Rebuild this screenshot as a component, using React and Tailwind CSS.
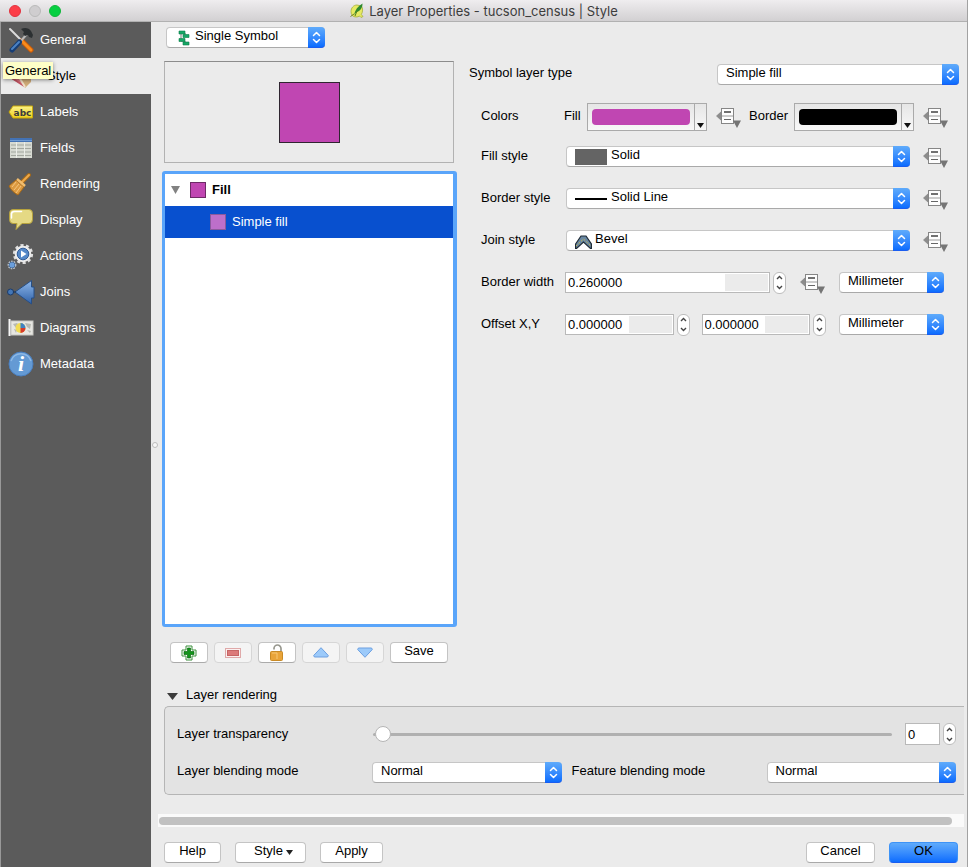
import React from "react";

const label = "text-[13px] leading-[16px] text-black";

function Stepper({ name }) {
  return (
    <span className="flex h-[22px] w-[13px] shrink-0 flex-col overflow-hidden rounded-[6px] border border-[#bdbdbd] bg-white">
      <button type="button" aria-label={`Increase ${name}`} className="flex flex-1 items-center justify-center">
        <svg width="7" height="5" viewBox="0 0 7 5" fill="none" stroke="#444" strokeWidth="1.4"><path d="M1 4l2.5-2.5L6 4" /></svg>
      </button>
      <button type="button" aria-label={`Decrease ${name}`} className="flex flex-1 items-center justify-center">
        <svg width="7" height="5" viewBox="0 0 7 5" fill="none" stroke="#444" strokeWidth="1.4"><path d="M1 1l2.5 2.5L6 1" /></svg>
      </button>
    </span>
  );
}

function Select({ id, ariaLabel, options, className = "", pad = "pl-[8px]", icon }) {
  return (
    <span className={`relative flex h-[21px] ${className}`}>
      <select
        id={id}
        aria-label={ariaLabel}
        className={`h-full w-full appearance-none rounded-[4px] border border-[#c6c6c6] border-b-[#a9a9a9] bg-white pr-5 pb-[4px] text-[13px] leading-[15px] text-black outline-none ${pad}`}
      >
        {options.map((o) => <option key={o}>{o}</option>)}
      </select>
      {icon && <span className="pointer-events-none absolute inset-y-0 left-[9px] flex items-center">{icon}</span>}
      <span className="pointer-events-none absolute inset-y-0 right-0 flex w-[17px] items-center justify-center rounded-r-[4px] border-b border-[#1a5df0] bg-linear-to-b from-[#5fabfb] to-[#0a6cfe]">
        <svg width="9" height="13" viewBox="0 0 9 13" fill="none" stroke="#fff" strokeWidth="1.5" strokeLinecap="round" strokeLinejoin="round">
          <path d="M1.5 4.500l3-3 3 3M1.500 8.500l3 3 3-3" />
        </svg>
      </span>
    </span>
  );
}

function ValueBox({ id, ariaLabel, value, className = "" }) {
  return (
    <span className={`flex h-[21px] min-w-0 border border-[#b9b9b9] bg-white p-px ${className}`}>
      <input id={id} aria-label={ariaLabel} defaultValue={value} className="h-full w-0 flex-1 bg-white pl-px pb-px text-[13px] leading-[16px] text-black outline-none" />
      <span className="w-[43px] shrink-0 bg-[#ebebeb]" />
    </span>
  );
}

function Override({ name }) {
  return (
    <button type="button" aria-label={`Data defined ${name}`} className="h-[22px] w-[25px] shrink-0">
      <svg width="25" height="22" viewBox="0 -2 25 22">
        <path d="M0.500 8L6 3v10z" fill="#8c8c8c" stroke="#7a7a7a" strokeWidth="0.6" />
        <rect x="5.500" y="0.500" width="12" height="15" fill="#fdfdfd" stroke="#868686" />
        <path d="M6 8h11" stroke="#9a9a9a" />
        <path d="M8 4h7" stroke="#4d4d4d" strokeWidth="1.600" />
        <path d="M8 11.500h7" stroke="#666" />
        <path d="M17 12.500h8L21 20z" fill="#757575" />
      </svg>
    </button>
  );
}

function ColorButton({ name, swatch }) {
  return (
    <button type="button" aria-label={name} className="flex h-[28px] flex-1 border border-[#aaa] bg-linear-to-b from-[#e6e6e6] to-[#f8f8f8]">
      <span className="flex h-full flex-1 items-center px-[4px]">
        <span className={`h-[16px] w-full rounded-[4px] ${swatch}`} />
      </span>
      <span className="flex h-full w-[12px] items-end justify-center border-l border-[#aaa] pb-[2px]">
        <svg width="7" height="5" viewBox="0 0 7 5"><path d="M0 0h7L3.500 5z" fill="#111" /></svg>
      </span>
    </button>
  );
}

const icons = {
  General: (
    <svg width="26" height="26" viewBox="0 0 26 26">
      <path d="M2 2l11 11" stroke="#dcdcdc" strokeWidth="2" strokeLinecap="round" />
      <path d="M14 14l9 9" stroke="#c85a08" strokeWidth="5" strokeLinecap="round" />
      <path d="M14 14l9 9" stroke="#f98b1d" strokeWidth="3" strokeLinecap="round" />
      <path d="M19 7L12 15" stroke="#b9b9b9" strokeWidth="2" />
      <path d="M11.500 15L4 23" stroke="#173d74" strokeWidth="5" strokeLinecap="round" />
      <path d="M11 15L4 22" stroke="#4b82c4" strokeWidth="2" strokeLinecap="round" />
      <path d="M13 2c4-2 8-1 10 2l2 4-1 3-3-1-1-2-3 1-2-2 1-2z" fill="#2c3032" />
    </svg>
  ),
  Style: (
    <svg width="26" height="26" viewBox="0 0 26 26">
      <path d="M3 15l10-3 7 10-3 1z" fill="#dd7380" />
      <path d="M3 15l5 1 10 7-1 1z" fill="#c25562" />
      <path d="M12 12h12v7l-6 6z" fill="#cfab78" />
      <path d="M12 14l6 10" stroke="#efe0c8" strokeWidth="2" />
    </svg>
  ),
  Labels: (
    <svg width="26" height="26" viewBox="0 0 26 26">
      <defs><linearGradient id="tag" x1="0" y1="0" x2="0" y2="1"><stop offset="0" stopColor="#fbf28a" /><stop offset="1" stopColor="#efd21c" /></linearGradient></defs>
      <path d="M1 13l4-6h19.500v12H5z" fill="url(#tag)" stroke="#c9a90b" strokeLinejoin="round" />
      <text x="14.500" y="16.500" textAnchor="middle" fontSize="9" fontWeight="700" fontFamily="DejaVu Sans, sans-serif" fill="#3c3c3c">abc</text>
    </svg>
  ),
  Fields: (
    <svg width="26" height="26" viewBox="0 0 26 26">
      <rect x="2" y="3" width="22" height="20" fill="#d7dad2" />
      <rect x="2" y="3" width="22" height="4" fill="#4372b4" />
      <path d="M2 5.500h22" stroke="#6e9ad2" />
      <path d="M3 10h20M3 13.500h20M3 17h20M3 20.500h20" stroke="#a3a79f" strokeWidth="1.200" />
      <path d="M8.500 7v16M16.500 7v16" stroke="#eceee9" />
    </svg>
  ),
  Rendering: (
    <svg width="26" height="26" viewBox="0 0 26 26">
      <path d="M14 11l7-7" stroke="#a96a17" strokeWidth="4" strokeLinecap="round" />
      <path d="M14 11l7-7" stroke="#eeaa4c" strokeWidth="2" strokeLinecap="round" />
      <path d="M8 9l8 7-6 8c-4-2-7-5-9-9z" fill="#dc9a41" stroke="#a96a17" />
      <path d="M8 11l-4 5M11 13l-5 6M13 15l-5 7" stroke="#f5c57e" />
      <path d="M9 8l8 7" stroke="#f3bd6d" strokeWidth="2.500" />
    </svg>
  ),
  Display: (
    <svg width="26" height="26" viewBox="0 0 26 26">
      <path d="M5 2.500h16q3.500 0 3.500 4v6q0 4-3.500 4h-7l-6 6 1-6H5q-3.500 0-3.500-4v-6q0-4 3.500-4z" fill="#e5d984" stroke="#b6a23d" />
      <path d="M3.500 11V7q0-2.500 3-2.500h7" fill="none" stroke="#fff" strokeWidth="1.500" strokeLinecap="round" />
    </svg>
  ),
  Actions: (
    <svg width="28" height="28" viewBox="0 0 28 28">
      <circle cx="16" cy="12" r="8.600" fill="none" stroke="#dedede" strokeWidth="3" strokeDasharray="3 2.400" />
      <circle cx="16" cy="12" r="8.300" fill="#ececec" />
      <circle cx="16" cy="12" r="5.800" fill="#5488c8" stroke="#315c98" />
      <path d="M14 8.500l5.500 3.500-5.500 3.500z" fill="#fff" />
      <circle cx="5" cy="23" r="3.600" fill="none" stroke="#cfd6df" strokeWidth="1.500" strokeDasharray="1.600 1" />
      <circle cx="5" cy="23" r="3" fill="#6b9fdc" stroke="#3d618f" strokeWidth="0.700" />
    </svg>
  ),
  Joins: (
    <svg width="28" height="26" viewBox="0 0 28 26">
      <defs><linearGradient id="join" x1="0" y1="0" x2="0" y2="1"><stop offset="0" stopColor="#8fb8ea" /><stop offset="1" stopColor="#2f61a8" /></linearGradient></defs>
      <path d="M8 13L24.500 1.500V8h2.500v11h-2.500v6z" fill="url(#join)" stroke="#274f86" />
      <circle cx="3.500" cy="13" r="3" fill="#4477b7" stroke="#1c3b68" />
      <path d="M6 13h3" stroke="#16335d" />
    </svg>
  ),
  Diagrams: (
    <svg width="26" height="26" viewBox="0 0 26 26">
      <rect x="3" y="6" width="22" height="14" fill="#e7e7e2" stroke="#c7c7c2" />
      <path d="M5 9l4-1 2 2-3 3zM17 8l6 1-1 5-3-2zM19 15l4 1-1 2zM6 14l3 1-1 3z" fill="#b7b9b2" />
      <path d="M1.500 4v17" stroke="#f6f6f6" strokeWidth="2" />
      <circle cx="12.500" cy="13" r="5" fill="#f2dc52" />
      <path d="M12.500 13V8a5 5 0 0 1 5 5z" fill="#3e82c4" />
      <path d="M12.500 13h5a5 5 0 0 1-5 5z" fill="#d63a2b" />
    </svg>
  ),
  Metadata: (
    <svg width="26" height="26" viewBox="0 0 26 26">
      <circle cx="13" cy="13" r="12" fill="#649ad4" stroke="#4a7fbf" />
      <path d="M3 10a10.500 10.500 0 0 1 20 0" fill="none" stroke="#8db8e5" strokeWidth="1.500" />
      <text x="13" y="20" textAnchor="middle" fontSize="22" fontWeight="700" fontStyle="italic" fontFamily="Liberation Serif, serif" fill="#fff">i</text>
    </svg>
  ),
};

function ToolButton({ name, disabled, children }) {
  return (
    <button
      type="button"
      aria-label={name}
      disabled={disabled}
      className="flex h-[21px] w-[38px] items-center justify-center rounded-[4px] border border-[#c4c4c4] border-b-[#ababab] bg-white disabled:border-[#d6d6d6] disabled:bg-[#f4f4f4]"
    >
      {children}
    </button>
  );
}

function PushButton({ className, children }) {
  return (
    <button type="button" className={`flex h-[21px] items-center justify-center rounded-[4px] border border-[#c4c4c4] border-b-[#a9a9a9] bg-white pb-[3px] text-[13px] leading-[16px] text-black ${className}`}>
      {children}
    </button>
  );
}

export default function App() {
  return (
    <div className="flex min-h-screen w-full flex-col border-r border-[#a2a2a2] bg-[#ebebeb] font-['Liberation_Sans',Arial,sans-serif] text-black">
      <header className="relative flex h-[22px] items-center justify-center border-b border-[#b1b1b1] bg-linear-to-b from-[#efedef] to-[#d2d0d2]">
        <div className="absolute inset-y-0 left-[9px] flex items-center gap-2">
          <button type="button" aria-label="Close" className="size-3 rounded-full border border-[#e2333f] bg-[#fc3e48]" />
          <button type="button" aria-label="Minimize" className="size-3 rounded-full border border-[#bababa] bg-[#cfcdcf]" />
          <button type="button" aria-label="Zoom" className="size-3 rounded-full border border-[#10b63a] bg-[#06cf41]" />
        </div>
        <h1 className="flex items-center gap-1 font-['Inter',Roboto,sans-serif] text-[13px] leading-[16px] text-[#3c3c3c]">
          <svg width="16" height="16" viewBox="0 0 16 16">
            <path d="M8 2c-3.500 0-6 3-6 6.500C2 12 4 14 7 14c1.500 0 2.500-.4 3.500-1l1.500 1.500 2-1-1.700-2C14 9 14 5 12.500 3z" fill="#e6ea62" stroke="#a4ad3c" strokeWidth="0.800" />
            <path d="M1.500 13.500L5 11" stroke="#6f8424" />
            <path d="M5 12C6 7 9 3 13.500 0.500 13.500 5 11 8.500 7.500 9z" fill="#2f8a2e" />
            <path d="M8 8l-2 5" stroke="#557d1f" />
          </svg>
          Layer Properties - tucson_census | Style
        </h1>
      </header>

      <div className="flex flex-1">
        <nav className="relative w-[151px] shrink-0 border-l border-[#999] bg-[#5b5b5b]">
          {Object.keys(icons).map((name) => (
            <a
              key={name}
              href={`#${name.toLowerCase()}`}
              className={`flex h-[36px] items-center text-[13px] leading-[16px] ${name === "Style" ? "bg-[#ebebeb] text-black" : "text-white"}`}
            >
              <span className={`flex shrink-0 items-center justify-center ${name === "Style" ? "w-[46px] pr-[8px]" : "w-[39px]"}`}>{icons[name]}</span>
              {name}
            </a>
          ))}
          <span role="tooltip" className="absolute left-[2px] top-[40px] bg-[#fefec7] px-[2px] text-[13px] leading-[17px] text-black shadow-[0_1px_4px_rgba(0,0,0,0.45)]">General</span>
        </nav>

        <div className="flex w-[7px] shrink-0 items-center justify-center">
          <span className="size-[6px] rounded-full border border-[#bcbcbc] bg-[#f7f7f7]" />
        </div>

        <main className="flex min-w-0 flex-1 flex-col">
          <div className="flex flex-1 pr-2">
            <section className="flex w-[299px] shrink-0 flex-col pt-[5px] pl-1">
              <Select
                ariaLabel="Renderer"
                options={["Single Symbol"]}
                className="ml-1 w-[159px]"
                pad="pl-[28px]"
                icon={
                  <svg className="ml-[3px]" width="12" height="16" viewBox="0 0 12 16">
                    <path d="M3 3v8h4v3M7 3v4" stroke="#777" fill="none" />
                    <path d="M1 1h6v3H1zM5 4.500h6v3H5zM1 8.500h6v3H1zM5 12h6v3H5z" fill="#16a765" stroke="#0b7d49" strokeWidth="0.600" />
                  </svg>
                }
              />
              <div className="mt-[13px] ml-[2px] mr-[3px] flex h-[102px] items-center justify-center border border-[#b2b2b2] border-t-[#8c8c8c]">
                <span className="size-[61px] border border-[#2f2530] bg-[#c046b2]" />
              </div>
              <div role="tree" aria-label="Symbol layers" className="mt-[8px] flex-1 rounded-[3px] border-[3px] border-r-4 border-[#5aa5fa] bg-white">
                <div role="treeitem" aria-expanded="true" className="flex h-[32px] items-center text-[13px] font-bold leading-[16px]">
                  <svg className="ml-[6px]" width="9" height="8" viewBox="0 0 9 8"><path d="M0 0h9L4.500 8z" fill="#828282" /></svg>
                  <span className="ml-[10px] mr-[6px] size-[16px] border border-[#6d2a66] bg-[#c046b2]" />
                  Fill
                </div>
                <div role="treeitem" aria-selected="true" className="flex h-[32px] items-center bg-[#0850cf] pl-[45px] text-[13px] leading-[16px] text-white">
                  <span className="mr-[6px] size-[16px] border border-[#8a5a9d] bg-[#bd6fca]" />
                  Simple fill
                </div>
              </div>
              <div className="mt-[15px] ml-2 flex gap-[6px]">
                <ToolButton name="Add symbol layer">
                  <svg width="16" height="16" viewBox="0 0 16 16">
                    <path d="M5 1h6v4h4v6h-4v4H5v-4H1V5h4z" fill="#fff" stroke="#3d8f3d" />
                    <path d="M6.500 3h3v3.500H13v3H9.500V13h-3V9.500H3v-3h3.500z" fill="#12941a" stroke="#0a6b10" strokeWidth="0.700" />
                  </svg>
                </ToolButton>
                <ToolButton name="Remove symbol layer" disabled>
                  <svg width="16" height="10" viewBox="0 0 16 10">
                    <rect x="0.500" y="0.500" width="15" height="9" fill="#fbf0f0" stroke="#dfa9a9" />
                    <rect x="2.500" y="2.500" width="11" height="5" fill="#dc7a7a" stroke="#c56565" />
                  </svg>
                </ToolButton>
                <ToolButton name="Lock layer's color">
                  <svg width="16" height="18" viewBox="0 0 16 18">
                    <path d="M5 5.500V4.500a3.500 3.500 0 0 1 7 0V8" fill="none" stroke="#98988f" strokeWidth="1.700" />
                    <rect x="1.500" y="7.500" width="12" height="9" rx="1" fill="#e9a439" stroke="#c98a25" />
                    <path d="M3 9h5v6" stroke="#f7c877" fill="none" />
                  </svg>
                </ToolButton>
                <ToolButton name="Move up" disabled>
                  <svg width="16" height="11" viewBox="0 0 16 11"><path d="M8 0.700L15.300 8.500q0 1.500-1.300 1.500H2Q.7 10 .7 8.500z" fill="#9ccafa" stroke="#6c9fe0" strokeLinejoin="round" /></svg>
                </ToolButton>
                <ToolButton name="Move down" disabled>
                  <svg width="16" height="11" viewBox="0 0 16 11"><path d="M8 10.300L15.300 2.500q0-1.500-1.300-1.500H2Q.7 1 .7 2.500z" fill="#9ccafa" stroke="#6c9fe0" strokeLinejoin="round" /></svg>
                </ToolButton>
                <PushButton className="w-[58px]">Save</PushButton>
              </div>
            </section>

            <section className="flex min-w-0 flex-1 flex-col pt-[42px] pl-[12px]">
              <div className="flex items-center justify-between">
                <label htmlFor="layer-type" className={`${label} pb-[3px]`}>Symbol layer type</label>
                <Select id="layer-type" options={["Simple fill"]} className="w-[242px]" />
              </div>
              <div className="flex flex-col gap-[21px] pt-[18px] pr-[11px] pl-[12px]">
                <div className="-mb-[6px] flex h-[28px] items-center">
                  <span className={`${label} w-[83px] shrink-0 pb-[2px]`}>Colors</span>
                  <span className={`${label} w-[23px] shrink-0 pb-[2px]`}>Fill</span>
                  <ColorButton name="Fill color" swatch="bg-[#c046b2]" />
                  <span className="flex pr-2 pl-[9px]"><Override name="fill color" /></span>
                  <span className={`${label} w-[45px] shrink-0 pb-[2px]`}>Border</span>
                  <ColorButton name="Border color" swatch="bg-black" />
                  <span className="flex pl-[9px]"><Override name="border color" /></span>
                </div>
                <div className="flex h-[21px] items-center">
                  <label htmlFor="fill-style" className={`${label} w-[85px] shrink-0 pb-[2px]`}>Fill style</label>
                  <Select id="fill-style" options={["Solid"]} className="mr-[13px] flex-1" pad="pl-[44px]" icon={<span className="h-[16px] w-[32px] bg-[#646464]" />} />
                  <Override name="fill style" />
                </div>
                <div className="flex h-[21px] items-center">
                  <label htmlFor="border-style" className={`${label} w-[85px] shrink-0 pb-[2px]`}>Border style</label>
                  <Select id="border-style" options={["Solid Line"]} className="mr-[13px] flex-1" pad="pl-[44px]" icon={<span className="h-[2px] w-[32px] bg-black" />} />
                  <Override name="border style" />
                </div>
                <div className="flex h-[21px] items-center">
                  <label htmlFor="join-style" className={`${label} w-[85px] shrink-0 pb-[2px]`}>Join style</label>
                  <Select
                    id="join-style"
                    options={["Bevel"]}
                    className="mr-[13px] flex-1"
                    pad="pl-[28px]"
                    icon={
                      <svg className="mt-[2px]" width="17" height="14" viewBox="0 0 17 14">
                        <path d="M0.600 9L6 1h5l5.400 8v4.400h-1L8.500 7 1.600 13.400h-1z" fill="#6887a3" stroke="#1e2a35" strokeWidth="1.200" />
                        <path d="M1 11l7.500-7L16 11" fill="none" stroke="#c9b850" strokeWidth="1" strokeDasharray="2 1.500" />
                      </svg>
                    }
                  />
                  <Override name="join style" />
                </div>
                <div className="flex h-[21px] items-center">
                  <label htmlFor="border-width" className={`${label} w-[84px] shrink-0 pb-[2px]`}>Border width</label>
                  <ValueBox id="border-width" value="0.260000" className="mr-[3px] flex-1" />
                  <Stepper name="border width" />
                  <span className="flex px-[14px]"><Override name="border width" /></span>
                  <Select ariaLabel="Border width unit" options={["Millimeter"]} className="mr-1 w-[105px] shrink-0" />
                </div>
                <div className="flex h-[21px] items-center">
                  <label htmlFor="offset-x" className={`${label} w-[84px] shrink-0 pb-[2px]`}>Offset X,Y</label>
                  <ValueBox id="offset-x" value="0.000000" className="mr-[3px] flex-1" />
                  <Stepper name="offset X" />
                  <ValueBox ariaLabel="Offset Y" value="0.000000" className="mr-[3px] ml-[12px] flex-1" />
                  <Stepper name="offset Y" />
                  <Select ariaLabel="Offset unit" options={["Millimeter"]} className="mr-1 ml-[13px] w-[105px] shrink-0" />
                </div>
              </div>
            </section>
          </div>

          <section className="mt-[24px] ml-[6px] mr-[3px]">
            <h2>
              <button type="button" aria-expanded="true" className={`flex items-center pl-[3px] ${label}`}>
                <svg className="mr-[8px] mt-[2px]" width="11" height="7" viewBox="0 0 11 7"><path d="M0 0h11L5.500 7z" fill="#3c3c3c" /></svg>
                Layer rendering
              </button>
            </h2>
            <div className="mt-[3px] rounded-l-[5px] border border-r-0 border-[#b5b5b5] bg-[#e3e3e3] pt-[16px] pr-[8px] pb-[11px] pl-[12px]">
              <div className="flex h-[22px] items-center">
                <label htmlFor="transparency" className={`${label} w-[196px] shrink-0`}>Layer transparency</label>
                <input
                  id="transparency"
                  type="range"
                  min="0"
                  max="100"
                  defaultValue="0"
                  className="mr-[13px] h-[3px] min-w-0 flex-1 appearance-none rounded-full bg-[#b0b0b0] px-[2px] [&::-webkit-slider-thumb]:size-[16px] [&::-webkit-slider-thumb]:appearance-none [&::-webkit-slider-thumb]:rounded-full [&::-webkit-slider-thumb]:border [&::-webkit-slider-thumb]:border-[#b5b5b5] [&::-webkit-slider-thumb]:bg-white"
                />
                <input aria-label="Layer transparency value" defaultValue="0" className="mr-[3px] h-[22px] w-[35px] border border-[#b9b9b9] bg-white pl-[2px] text-[13px] leading-[16px] outline-none" />
                <Stepper name="transparency" />
              </div>
              <div className="mt-[17px] flex h-[21px] items-center">
                <label htmlFor="layer-blend" className={`${label} w-[195px] shrink-0 pb-[3px]`}>Layer blending mode</label>
                <Select id="layer-blend" options={["Normal"]} className="flex-1" />
                <label htmlFor="feature-blend" className={`${label} ml-[10px] w-[195px] shrink-0 pb-[3px]`}>Feature blending mode</label>
                <Select id="feature-blend" options={["Normal"]} className="flex-1" />
              </div>
            </div>
          </section>

          <div className="mt-[19px] mr-[3px] flex h-[13px] items-center bg-[#fafafa] pr-[12px] pl-px">
            <span className="h-[8px] flex-1 rounded-full bg-[#c1c1c1]" />
          </div>

          <footer className="mt-[15px] mb-[4px] flex pr-[9px] pl-[6px]">
            <PushButton className="w-[57px]">Help</PushButton>
            <PushButton className="ml-[14px] w-[71px] gap-[3px] pl-[6px]">
              Style
              <svg className="mt-[3px]" width="7" height="5" viewBox="0 0 7 5"><path d="M0 0h7L3.500 5z" fill="#222" /></svg>
            </PushButton>
            <PushButton className="ml-[14px] w-[63px]">Apply</PushButton>
            <PushButton className="mr-[14px] ml-auto w-[69px]">Cancel</PushButton>
            <button type="button" className="flex h-[21px] w-[69px] items-center justify-center rounded-[4px] border border-[#3d93f7] border-b-[#1a5df0] bg-linear-to-b from-[#5fabfb] to-[#0a6cfe] pb-[3px] text-[13px] leading-[16px] text-black">OK</button>
          </footer>
        </main>
      </div>
    </div>
  );
}
